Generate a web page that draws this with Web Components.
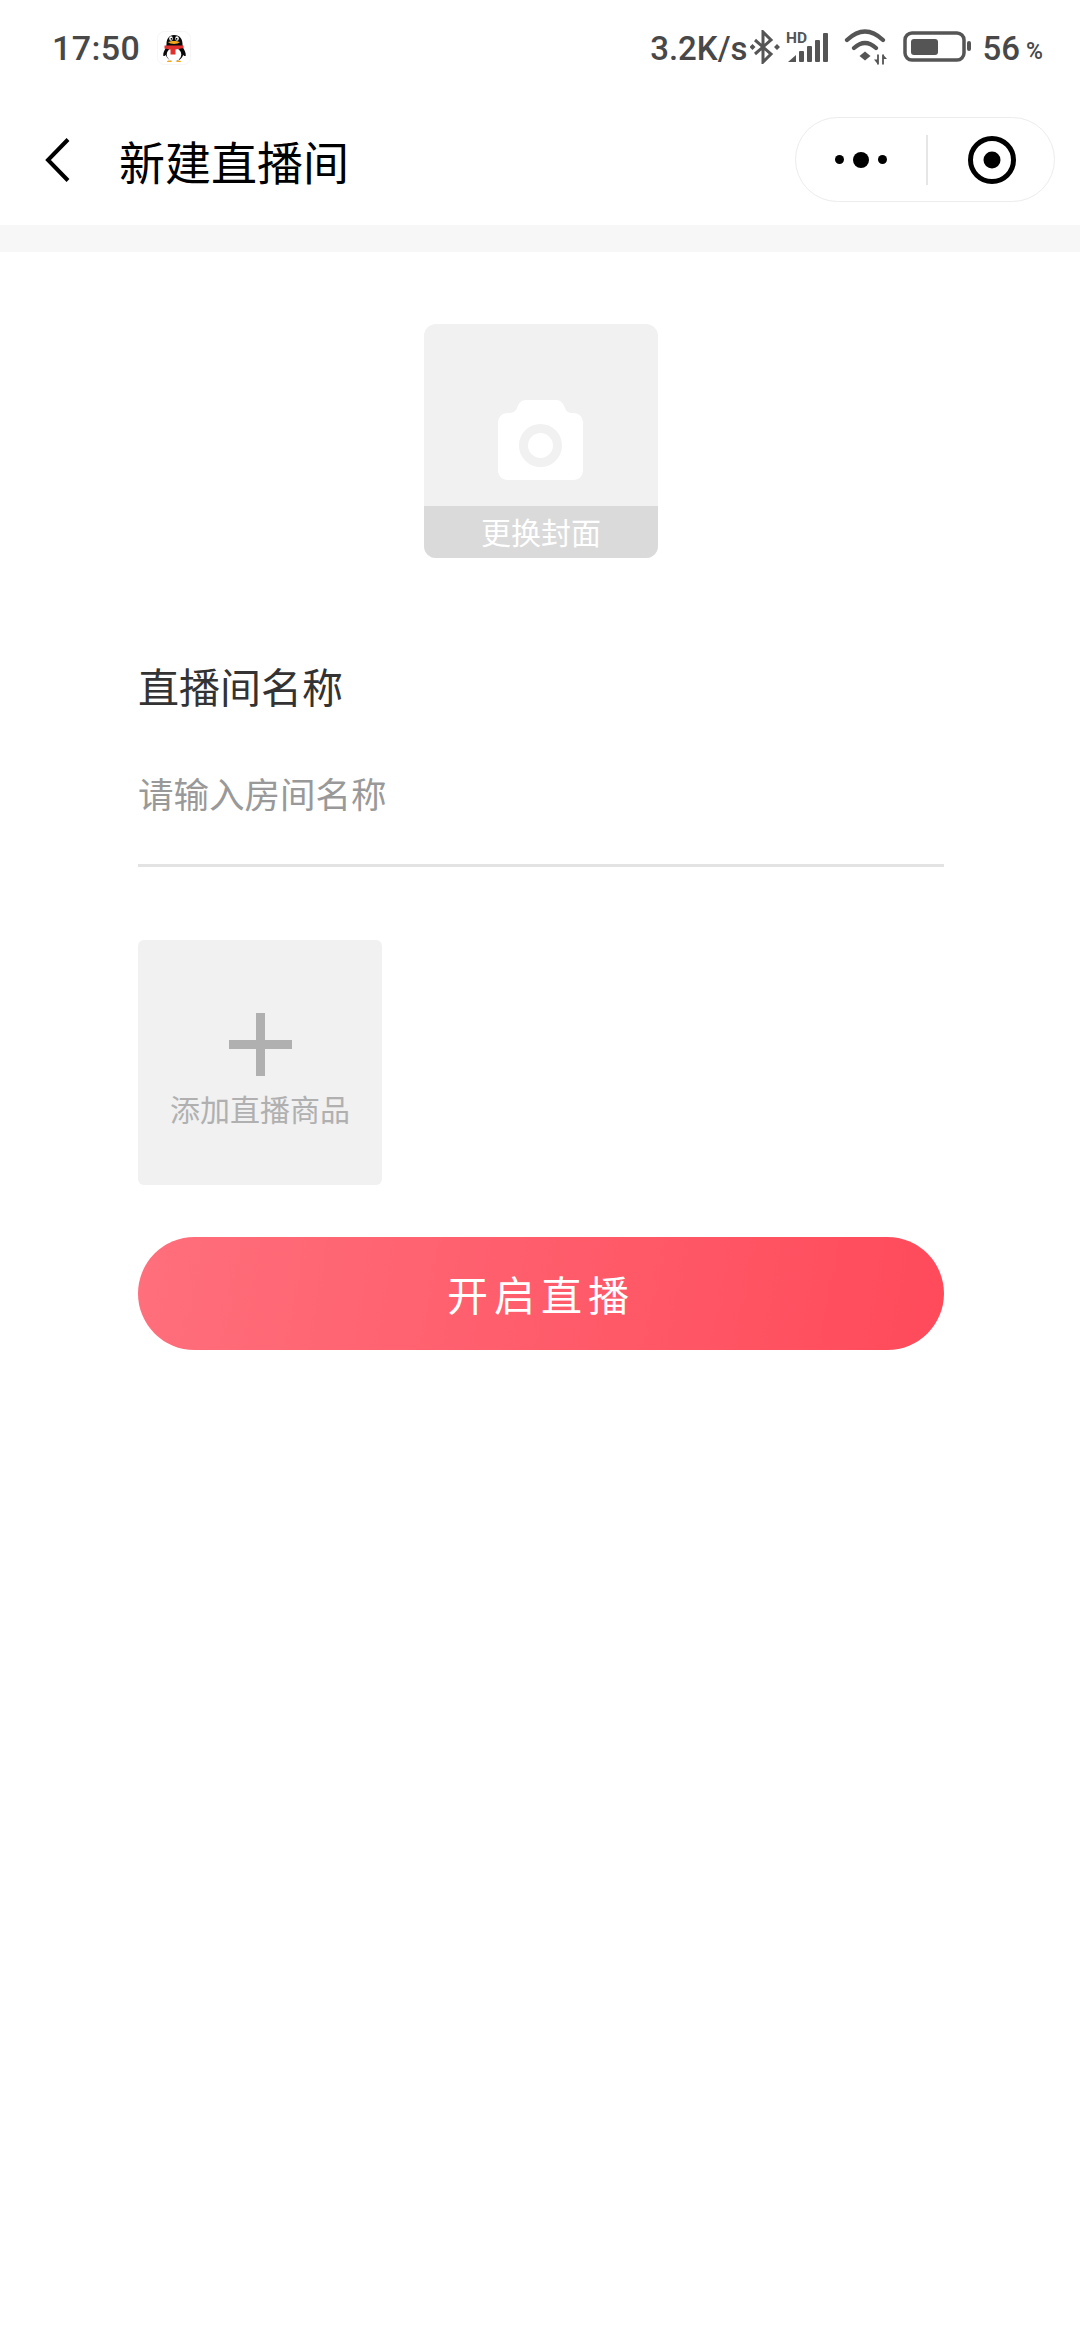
<!DOCTYPE html>
<html lang="zh-CN"><head><meta charset="utf-8"><title>新建直播间</title>
<style>
html,body{margin:0;padding:0;background:#fff}
body{width:1080px;height:2340px;overflow:hidden;font-family:"Noto Sans CJK SC","Noto Sans",sans-serif}
live-app{display:block}
</style></head><body>
<live-app>
  <status-bar></status-bar>
  <nav-bar>新建直播间</nav-bar>
  <main-form>
    <cover-picker>更换封面</cover-picker>
    <text-field label="直播间名称" placeholder="请输入房间名称"></text-field>
    <add-product>添加直播商品</add-product>
    <primary-button>开启直播</primary-button>
  </main-form>
</live-app>
<script>
function def(name, css, html){
  customElements.define(name, class extends HTMLElement{
    constructor(){super();const r=this.attachShadow({mode:'open'});
      r.innerHTML='<style>'+css+'</style>'+(typeof html==='function'?html(this):html);}
    connectedCallback(){
      this.shadowRoot.querySelectorAll('[data-attr]').forEach(e=>{e.textContent=this.getAttribute(e.dataset.attr)||'';});
    }
  });
}
const C='#555';
def('status-bar',`
:host{display:flex;align-items:center;height:94px;padding:0 37px 0 52px;box-sizing:border-box;color:#484848;font:500 34px/1 Roboto,sans-serif}
.time{letter-spacing:.4px;margin-top:2px}
.qq{margin-left:17px;margin-top:1px}
.right{margin-left:auto;display:flex;align-items:center}
svg{display:block;flex:none}
.speed{font-size:33px;margin-top:2px}
.num{font-size:33px;margin-left:10px;margin-top:2px}
.pct{font-size:23px;margin-left:6px;margin-top:9px;font-weight:500}
`,`
<span class="time">17:50</span>
<svg class="qq" width="34" height="34" viewBox="0 0 34 34">
 <rect x=".5" y=".5" width="33" height="33" rx="7" fill="#fff" stroke="#f6f6f6"/>
 <path d="M17 4c-5 0-7.500 4-7.500 9 0 1-.2 2.500-.7 4-1.300 2-3 5-2.500 8 1 .5 2.500-1 2.500-1 1 3 4 6 8.700 6s7.700-3 8.700-6c0 0 1.500 1.500 2.500 1 .5-3-1.200-6-2.500-8-.5-1.500-.7-3-.7-4 0-5-2.500-9-8.500-9z" fill="#0a0a0a"/>
 <ellipse cx="17" cy="23.500" rx="7.300" ry="6.800" fill="#fff"/>
 <path d="M7.500 14.500h19v2.500l-8 1.500v5h-5v-5l-6-1z" fill="#e2312c"/>
 <ellipse cx="14" cy="7.500" rx="1.800" ry="2.300" fill="#fff"/><ellipse cx="20" cy="7.500" rx="1.800" ry="2.300" fill="#fff"/>
 <circle cx="14.400" cy="7.800" r=".9" fill="#000"/><circle cx="19.600" cy="7.800" r=".9" fill="#000"/>
 <path d="M11 11c3-1.500 9-1.500 12 0-2 2.500-10 2.500-12 0z" fill="#f2a81d"/>
 <path d="M10 30.500c1-1.500 4-1.500 5 .5h-5zM19 31c1-2 4-2 5-.5v.5z" fill="#f2a81d"/>
</svg>
<div class="right">
 <span class="speed">3.2K/s</span>
 <svg style="margin-left:2px" width="30" height="34" viewBox="0 0 30 34"><path d="M5 24L21 10 13 2v30l8-8L5 10" fill="none" stroke="${C}" stroke-width="3"/><path d="M2.500 14L5.500 17 2.500 20-.5 17zM27 14L30 17 27 20 24 17z" fill="${C}"/></svg>
 <svg style="margin-left:6px;margin-top:-2px" width="42" height="38" viewBox="0 -6 42 38">
  <text x="0" y="10" font-family="Roboto,sans-serif" font-weight="700" font-size="15.500" fill="${C}">HD</text>
  <g transform="translate(0 -1)"><path d="M2 30l8-7v7z" fill="${C}"/>
  <rect x="13" y="19" width="5" height="11" rx="1" fill="${C}"/><rect x="21" y="14" width="5" height="16" rx="1" fill="${C}"/><rect x="29" y="8" width="5" height="22" rx="1" fill="${C}"/><rect x="37" y="1" width="5" height="29" rx="1" fill="${C}"/></g>
 </svg>
 <svg style="margin-left:16px" width="44" height="36" viewBox="0 0 44 36">
  <path d="M3 11Q21-6 39 11M10 19Q21 9 32 19" fill="none" stroke="${C}" stroke-width="4.200" stroke-linecap="round"/>
  <path d="M21 22.500l5.500 4.500-5.500 4.500-5.500-4.500z" fill="${C}"/>
  <path d="M34 25.500v10M39 25.500v10" stroke="${C}" stroke-width="1.800" fill="none"/>
  <path d="M30 30.500l4 5v-5zM43 30l-4-4.500V30z" fill="${C}"/>
 </svg>
 <svg style="margin-left:15px" width="70" height="32" viewBox="0 0 70 32">
  <rect x="2" y="2" width="59" height="27" rx="7" fill="none" stroke="${C}" stroke-width="3.500"/>
  <rect x="8" y="8" width="27" height="16" rx="3" fill="${C}"/>
  <rect x="64" y="10" width="4" height="10" rx="2" fill="${C}"/>
 </svg>
 <span class="num">56</span><span class="pct">%</span>
</div>`);

def('nav-bar',`
:host{display:flex;align-items:center;height:131px;position:relative;padding:0 25px 0 45px;box-sizing:border-box;color:#000}
.back{display:block;flex:none}
.title{margin-left:48px;font-size:46px;line-height:60px;font-weight:400}
.cap{margin-left:auto;display:flex;align-items:center;width:260px;height:85px;box-sizing:border-box;border:1.500px solid #ececec;border-radius:43px}
.dots{width:130px;display:flex;justify-content:center;align-items:center;gap:9px;padding-left:0}
.s{width:9px;height:9px;border-radius:50%;background:#000}.b{width:16px;height:16px;border-radius:50%;background:#000}
.div{width:1.500px;height:50px;background:#e6e6e6}
.rec{flex:1;display:flex;justify-content:center;padding-left:2px}
`,`
<svg class="back" width="26" height="46" viewBox="0 0 26 46"><path d="M23 2.500L3 23l20 20.500" fill="none" stroke="#000" stroke-width="4"/></svg>
<span class="title"><slot></slot></span>
<div class="cap"><div class="dots"><i class="s"></i><i class="b"></i><i class="s"></i></div><div class="div"></div>
<div class="rec"><svg width="48" height="48" viewBox="0 0 48 48"><circle cx="24" cy="24" r="21.500" fill="none" stroke="#000" stroke-width="5"/><circle cx="24" cy="24" r="8.500" fill="#000"/></svg></div></div>`);

def('main-form',`
:host{display:flex;flex-direction:column;width:806px;margin-left:138px;position:relative}
:host::before{content:"";display:block;width:1080px;height:27px;margin-left:-138px;background:#f7f7f7;flex:none}
`,`<slot></slot>`);

def('cover-picker',`
:host{display:flex;flex-direction:column;align-self:center;width:234px;height:234px;margin-top:72px;border-radius:12px;overflow:hidden;background:#f1f1f1}
.art{flex:1;display:flex;align-items:center;justify-content:center;padding-top:50px}
.band{height:52px;background:#dadada;color:#fff;font-size:30px;line-height:50px;text-align:center;font-weight:400}
svg{display:block}
`,`
<div class="art"><svg width="86" height="82" viewBox="0 0 86 82"><path d="M28 1h30c5 0 7 3 9 8 1 3 3 5 8 5 6 0 10 4 10 10v47c0 6-4 10-10 10H10c-6 0-10-4-10-10V24c0-6 4-10 10-10 5 0 8-2 9-5 2-5 4-8 9-8z" fill="#fff"/><circle cx="42.500" cy="46.500" r="17" fill="none" stroke="#f1f1f1" stroke-width="9"/></svg></div>
<div class="band"><slot></slot></div>`);

def('text-field',`
:host{display:block;margin-top:99px}
.l{font-size:41px;line-height:56px;color:#333;font-weight:400}
.p{font-size:35.500px;line-height:56px;color:#999;margin-top:52px;padding-bottom:43px;border-bottom:3px solid #e3e3e3}
`,`<div class="l" data-attr="label"></div><div class="p" data-attr="placeholder"></div>`);

def('add-product',`
:host{display:flex;flex-direction:column;align-items:center;width:244px;height:245px;margin-top:73px;background:#f1f1f1;border-radius:6px;box-sizing:border-box;padding-top:73px;color:#b0b0b0;font-size:30px;line-height:44px}
svg{display:block}
.t{margin-top:10px}
`,`
<svg width="63" height="63" viewBox="0 0 63 63"><path d="M27 0h9v27h27v9H36v27h-9V36H0v-9h27z" fill="#b0b0b0"/></svg>
<div class="t"><slot></slot></div>`);

def('primary-button',`
:host{display:flex;align-items:center;justify-content:center;height:113px;box-sizing:border-box;padding-bottom:2px;margin-top:52px;border-radius:57px;background:linear-gradient(100deg,#ff6f7c,#ff4a5a);color:#fff;font-size:41px;letter-spacing:6px;line-height:54px}
`,`<slot></slot>`);
</script>
</body></html>
